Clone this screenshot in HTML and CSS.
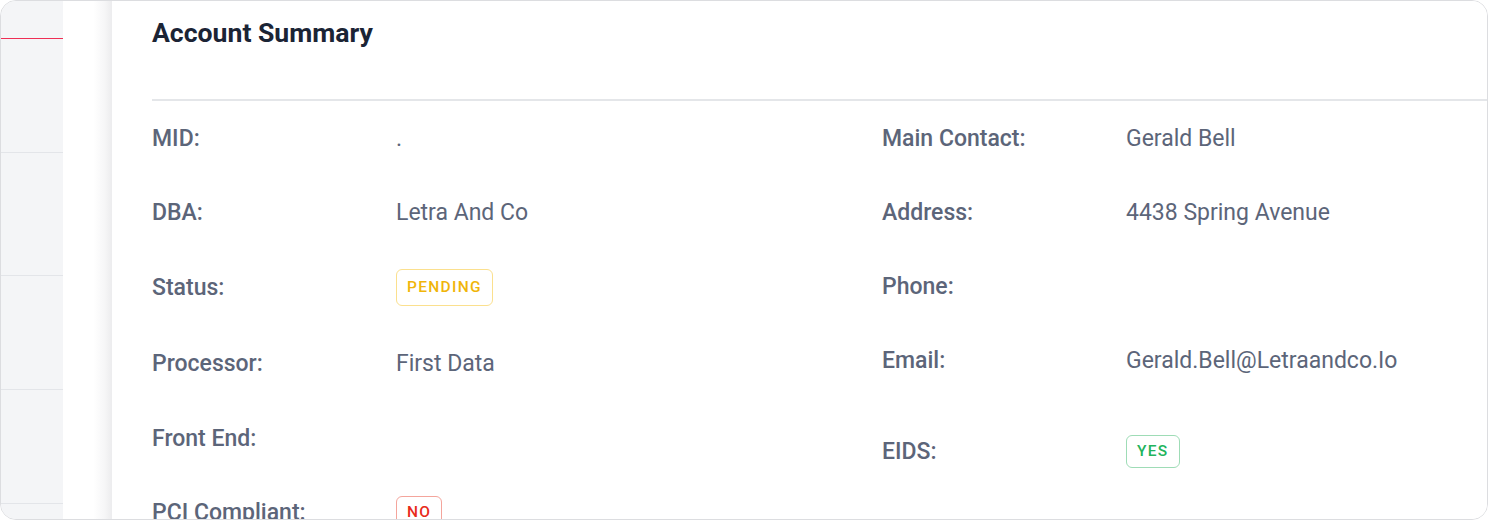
FILE: index.html
```html
<!DOCTYPE html>
<html>
<head>
<meta charset="utf-8">
<link rel="stylesheet" href="styles.css">
</head>
<body>
<div class="frame">
  <nav class="nav">
    <div class="nav-item nav-item--top"></div>
    <div class="nav-item nav-item--active"></div>
    <div class="nav-item nav-item--a"></div>
    <div class="nav-item nav-item--b"></div>
    <div class="nav-item nav-item--c"></div>
    <div class="nav-item"></div>
  </nav>
  <div class="gutter"></div>
  <main class="card">
    <header class="card-head">
      <h1 class="card-title">Account Summary</h1>
    </header>
    <div class="columns">
      <div class="col">
        <div class="row"><span class="label">MID:</span><span class="value">.</span></div>
        <div class="row"><span class="label">DBA:</span><span class="value">Letra And Co</span></div>
        <div class="row row--tall"><span class="label">Status:</span><span class="value"><span class="badge badge--pending">PENDING</span></span></div>
        <div class="row row--tall"><span class="label">Processor:</span><span class="value">First Data</span></div>
        <div class="row"><span class="label">Front End:</span><span class="value"></span></div>
        <div class="row"><span class="label">PCI Compliant:</span><span class="value"><span class="badge badge--no">NO</span></span></div>
      </div>
      <div class="col">
        <div class="row"><span class="label">Main Contact:</span><span class="value">Gerald Bell</span></div>
        <div class="row"><span class="label">Address:</span><span class="value">4438 Spring Avenue</span></div>
        <div class="row"><span class="label">Phone:</span><span class="value"></span></div>
        <div class="row"><span class="label">Email:</span><span class="value">Gerald.Bell@Letraandco.Io</span></div>
        <div class="row row--badge"><span class="label">EIDS:</span><span class="value"><span class="badge badge--yes">YES</span></span></div>
      </div>
    </div>
  </main>
</div>
</body>
</html>
```
FILE: styles.css
```css
* { box-sizing: border-box; }
html, body { margin: 0; padding: 0; background: #ffffff; }
body { font-family: Roboto, "Liberation Sans", sans-serif; }

.frame {
  width: 1488px;
  height: 520px;
  border: 1px solid #dcdde0;
  border-radius: 16px;
  overflow: hidden;
  display: flex;
  background: #ffffff;
}

.nav {
  width: 62px;
  flex: none;
  background: #f4f5f7;
  display: flex;
  flex-direction: column;
  overflow: hidden;
}
.nav-item { flex: none; height: 114px; border-bottom: 1px solid #e3e5e9; }
.nav-item--top { height: 38px; border-bottom: 1px solid #ee2f55; }
.nav-item--active { height: 114px; }
.nav-item--a { height: 123px; }
.nav-item--b { height: 114px; }
.nav-item--c { height: 114px; }

.gutter {
  width: 49px;
  flex: none;
  background: linear-gradient(to right, #ffffff 0%, #ffffff 62%, #f6f6f7 85%, #ececee 100%);
}

.card {
  flex: 1;
  min-width: 0;
  background: #ffffff;
  padding-left: 40px;
  display: flex;
  flex-direction: column;
  overflow: hidden;
}

.card-head {
  flex: none;
  height: 100px;
  border-bottom: 2px solid #e4e6e9;
  padding-top: 14px;
}
.card-title {
  margin: 0;
  font-size: 26.6px;
  line-height: 36px;
  font-weight: 700;
  color: #1b2435;
}

.columns { display: flex; flex: none; }
.col { width: 730px; flex: none; display: flex; flex-direction: column; }

.row {
  flex: none;
  height: 74px;
  display: flex;
  align-items: center;
  font-size: 23px;
  color: #5c6579;
}
.row--tall { height: 76px; }
.row--badge { margin-top: 17px; }
.label { width: 244px; flex: none; font-weight: 500; }
.value { font-weight: 400; white-space: nowrap; }

.badge {
  display: inline-block;
  font-size: 15.5px;
  font-weight: 500;
  letter-spacing: 1.3px;
  border-radius: 6px;
  border: 1.5px solid;
  background: #ffffff;
}
.badge--pending { color: #f0b50a; border-color: #fbe08e; padding: 8px 10px; line-height: 19px; }
.badge--yes { color: #22b45c; border-color: #9edcb6; padding: 6px 10px; line-height: 19px; }
.badge--no { color: #e82a1a; border-color: #f4a59c; padding: 6px 10px; line-height: 19px; }
```
